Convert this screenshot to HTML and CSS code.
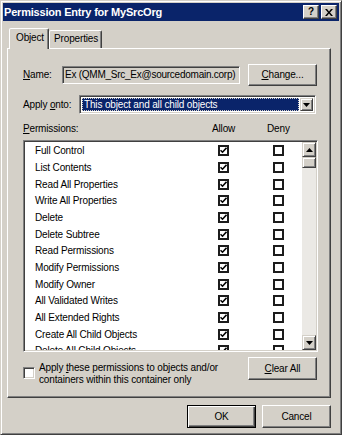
FILE: index.html
```html
<!DOCTYPE html>
<html lang="en">
  <head>
    <meta charset="UTF-8" />
    <meta name="viewport" content="width=device-width, initial-scale=1.0" />
    <title>Permission Entry for MySrcOrg</title>
    <link rel="stylesheet" href="styles.css">
  </head>
  <body>
    <div class="window">
      <div class="titlebar">
        <span class="title">Permission Entry for MySrcOrg</span>
        <div class="caption-btns">
          <span class="cap-btn help">?</span>
          <span class="cap-btn">
            <svg width="8" height="7" viewBox="0 0 8 7"><path d="M0 0h2l2 2.5L6 0h2L5 3.5 8 7H6L4 4.5 2 7H0l3-3.5z" fill="#000"/></svg>
          </span>
        </div>
      </div>
      <div class="dialog">
        <div class="tabs">
          <span class="tab active">Object</span>
          <span class="tab">Properties</span>
        </div>
        <div class="panel">
          <div class="name-row">
            <label class="field-label name-label"><u>N</u>ame:</label>
            <div class="textbox">Ex (QMM_Src_Ex@sourcedomain.corp)</div>
            <button class="btn change-btn"><u>C</u>hange...</button>
          </div>
          <div class="apply-row">
            <label class="field-label apply-label">Apply <u>o</u>nto:</label>
            <div class="combo">
              <span class="combo-value">This object and all child objects</span>
              <span class="combo-arrow">
                <svg width="7" height="4" viewBox="0 0 7 4"><path d="M0 0h7L3.5 4z" fill="#000"/></svg>
              </span>
            </div>
          </div>
          <div class="perm-head">
            <span><u>P</u>ermissions:</span>
            <span>Allow</span>
            <span>Deny</span>
          </div>
          <div class="listbox">
            <div class="list-rows" id="perm-rows"></div>
            <div class="scrollbar">
              <span class="scroll-btn">
                <svg width="7" height="4" viewBox="0 0 7 4"><path d="M3.5 0L7 4H0z" fill="#000"/></svg>
              </span>
              <span class="scroll-thumb"></span>
              <span class="scroll-track"></span>
              <span class="scroll-btn">
                <svg width="7" height="4" viewBox="0 0 7 4"><path d="M0 0h7L3.5 4z" fill="#000"/></svg>
              </span>
            </div>
          </div>
          <div class="bottom-row">
            <label class="apply-check">
              <span class="check3d"></span>
              <span class="apply-text">Apply <u>t</u>hese permissions to objects and/or<br />containers within this container only</span>
            </label>
            <button class="btn clear-btn"><u>C</u>lear All</button>
          </div>
        </div>
        <div class="footer">
          <button class="btn default-btn">OK</button>
          <button class="btn">Cancel</button>
        </div>
      </div>
    </div>
    <script>
      let rowsBox = document.getElementById("perm-rows");
      let permissions = [
        "Full Control",
        "List Contents",
        "Read All Properties",
        "Write All Properties",
        "Delete",
        "Delete Subtree",
        "Read Permissions",
        "Modify Permissions",
        "Modify Owner",
        "All Validated Writes",
        "All Extended Rights",
        "Create All Child Objects",
        "Delete All Child Objects",
      ];

      const tick = `<svg width="7" height="7" viewBox="0 0 7 7"><path d="M0.5 3.2l2 2 4-4.4" stroke="#000" stroke-width="1.6" fill="none"/></svg>`;

      permissions.forEach((name) => {
        let row = document.createElement("div");
        row.className = "perm-row";
        row.innerHTML = `
            <span class="perm-name">${name}</span>
            <span class="flat-check">${tick}</span>
            <span class="flat-check"></span>
        `;
        rowsBox.appendChild(row);
      });
    </script>
  </body>
</html>
```

FILE: styles.css
```css
body {
  margin: 0;
  font-family: "Liberation Sans", Arial, sans-serif;
  font-size: 10px;
  letter-spacing: -0.15px;
  color: #000;
}
u {
  text-decoration-thickness: 1px;
  text-underline-offset: 1px;
}
/* Window frame */
.window {
  width: 342px;
  height: 435px;
  box-sizing: border-box;
  background-color: #d4d0c8;
  border: 1px solid;
  border-color: #d4d0c8 #404040 #404040 #d4d0c8;
  box-shadow: inset 1px 1px #fff, inset -1px -1px #808080;
  padding: 2px;
}
/* Title bar */
.titlebar {
  height: 18px;
  background-color: #0a246a;
  display: flex;
  align-items: center;
  justify-content: space-between;
  padding: 0 2px 0 1px;
}
.title {
  color: #fff;
  font-weight: bold;
  font-size: 11px;
  letter-spacing: -0.2px;
}
.caption-btns {
  display: flex;
  gap: 2px;
}
.cap-btn {
  width: 16px;
  height: 14px;
  box-sizing: border-box;
  background-color: #d4d0c8;
  border: 1px solid;
  border-color: #fff #404040 #404040 #fff;
  box-shadow: inset -1px -1px #808080;
  display: flex;
  align-items: center;
  justify-content: center;
}
.cap-btn.help {
  font-weight: bold;
  font-size: 10px;
  line-height: 10px;
}
/* Dialog body */
.dialog {
  padding: 7px 8px 0 4px;
}
.tabs {
  display: flex;
  align-items: flex-end;
  height: 21px;
  padding-left: 2px;
  margin-bottom: -1px;
  position: relative;
  z-index: 1;
}
.tab {
  height: 17px;
  line-height: 16px;
  padding: 0 3px 0 4px;
  margin-bottom: 1px;
  background-color: #d4d0c8;
  border: 1px solid;
  border-bottom: none;
  border-color: #fff #404040 transparent #fff;
  box-shadow: inset -1px 0 #808080;
  border-radius: 2px 2px 0 0;
}
.tab.active {
  height: 20px;
  line-height: 18px;
  margin-bottom: 0;
  padding: 0 4px 0 6px;
}
.panel {
  height: 350px;
  box-sizing: border-box;
  border: 1px solid;
  border-color: #fff #404040 #404040 #fff;
  box-shadow: inset -1px -1px #808080;
  padding: 14px 13px 0 15px;
}
/* 3D buttons */
.btn {
  font-family: inherit;
  font-size: 10px;
  letter-spacing: inherit;
  color: #000;
  width: 69px;
  height: 23px;
  padding: 0;
  background-color: #d4d0c8;
  border: 1px solid;
  border-color: #fff #404040 #404040 #fff;
  box-shadow: inset -1px -1px #808080, inset 1px 1px #d4d0c8;
}
.default-btn {
  border: 1px solid #000;
  box-shadow: inset 1px 1px #fff, inset -1px -1px #404040, inset -2px -2px #808080;
}
/* Name row */
.name-row {
  display: flex;
  align-items: center;
  height: 23px;
}
.field-label {
  flex: none;
}
.name-label {
  width: 39px;
}
.textbox {
  width: 178px;
  height: 18px;
  box-sizing: border-box;
  border: 1px solid;
  border-color: #808080 #fff #fff #808080;
  box-shadow: inset 1px 1px #404040, inset -1px -1px #d4d0c8;
  padding: 0 0 0 2px;
  line-height: 16px;
  letter-spacing: -0.25px;
  white-space: nowrap;
  overflow: hidden;
}
.change-btn {
  margin-left: 8px;
  height: 22px;
}
/* Apply onto row */
.apply-row {
  display: flex;
  align-items: center;
  margin-top: 9px;
  height: 19px;
}
.apply-label {
  width: 56px;
}
.combo {
  width: 237px;
  height: 19px;
  box-sizing: border-box;
  background-color: #fff;
  border: 1px solid;
  border-color: #808080 #fff #fff #808080;
  box-shadow: inset 1px 1px #404040, inset -1px -1px #d4d0c8;
  padding: 2px;
  display: flex;
  gap: 1px;
}
.combo-value {
  flex: 1;
  background-color: #0a246a;
  color: #fff;
  outline: 1px dotted #d4d0c8;
  outline-offset: -1px;
  padding-left: 2px;
  line-height: 13px;
}
.combo-arrow {
  width: 13px;
  box-sizing: border-box;
  background-color: #d4d0c8;
  border: 1px solid;
  border-color: #d4d0c8 #404040 #404040 #d4d0c8;
  box-shadow: inset 1px 1px #fff, inset -1px -1px #808080;
  display: flex;
  align-items: center;
  justify-content: center;
}
/* Permission list */
.perm-head {
  display: grid;
  grid-template-columns: 189px 55px auto;
  margin-top: 9px;
  height: 12px;
  line-height: 12px;
}
.listbox {
  width: 295px;
  height: 212px;
  box-sizing: border-box;
  margin-top: 5px;
  background-color: #fff;
  border: 1px solid;
  border-color: #808080 #fff #fff #808080;
  box-shadow: inset 1px 1px #404040, inset -1px -1px #d4d0c8;
  padding: 1px;
  display: flex;
}
.list-rows {
  flex: 1;
  overflow: hidden;
  padding-top: 0.5px;
}
.perm-row {
  display: grid;
  grid-template-columns: 183px 55px 11px;
  align-items: center;
  height: 16.67px;
  padding-left: 10px;
}
.perm-name {
  white-space: nowrap;
}
.flat-check {
  width: 11px;
  height: 11px;
  box-sizing: border-box;
  border: 2px solid #1c1c1c;
  background-color: #fff;
  display: flex;
  align-items: center;
  justify-content: center;
}
.scrollbar {
  width: 14px;
  display: flex;
  flex-direction: column;
}
.scroll-btn,
.scroll-thumb {
  box-sizing: border-box;
  background-color: #d4d0c8;
  border: 1px solid;
  border-color: #d4d0c8 #404040 #404040 #d4d0c8;
  box-shadow: inset 1px 1px #fff, inset -1px -1px #808080;
}
.scroll-btn {
  height: 15px;
  display: flex;
  align-items: center;
  justify-content: center;
}
.scroll-thumb {
  height: 11px;
}
.scroll-track {
  flex: 1;
  background-color: #ebe9e5;
}
/* Bottom of tab panel */
.bottom-row {
  display: flex;
  justify-content: space-between;
  align-items: flex-start;
  margin-top: 5px;
}
.apply-check {
  display: flex;
  align-items: flex-start;
  gap: 4px;
  padding-top: 5px;
}
.check3d {
  flex: none;
  width: 12px;
  height: 12px;
  box-sizing: border-box;
  margin-top: 5px;
  background-color: #fff;
  border: 1px solid;
  border-color: #808080 #fff #fff #808080;
  box-shadow: inset 1px 1px #404040, inset -1px -1px #d4d0c8;
}
.apply-text {
  line-height: 12px;
}
.clear-btn {
  flex: none;
}
/* OK / Cancel */
.footer {
  display: flex;
  justify-content: flex-end;
  gap: 6px;
  margin-top: 7px;
}
```
